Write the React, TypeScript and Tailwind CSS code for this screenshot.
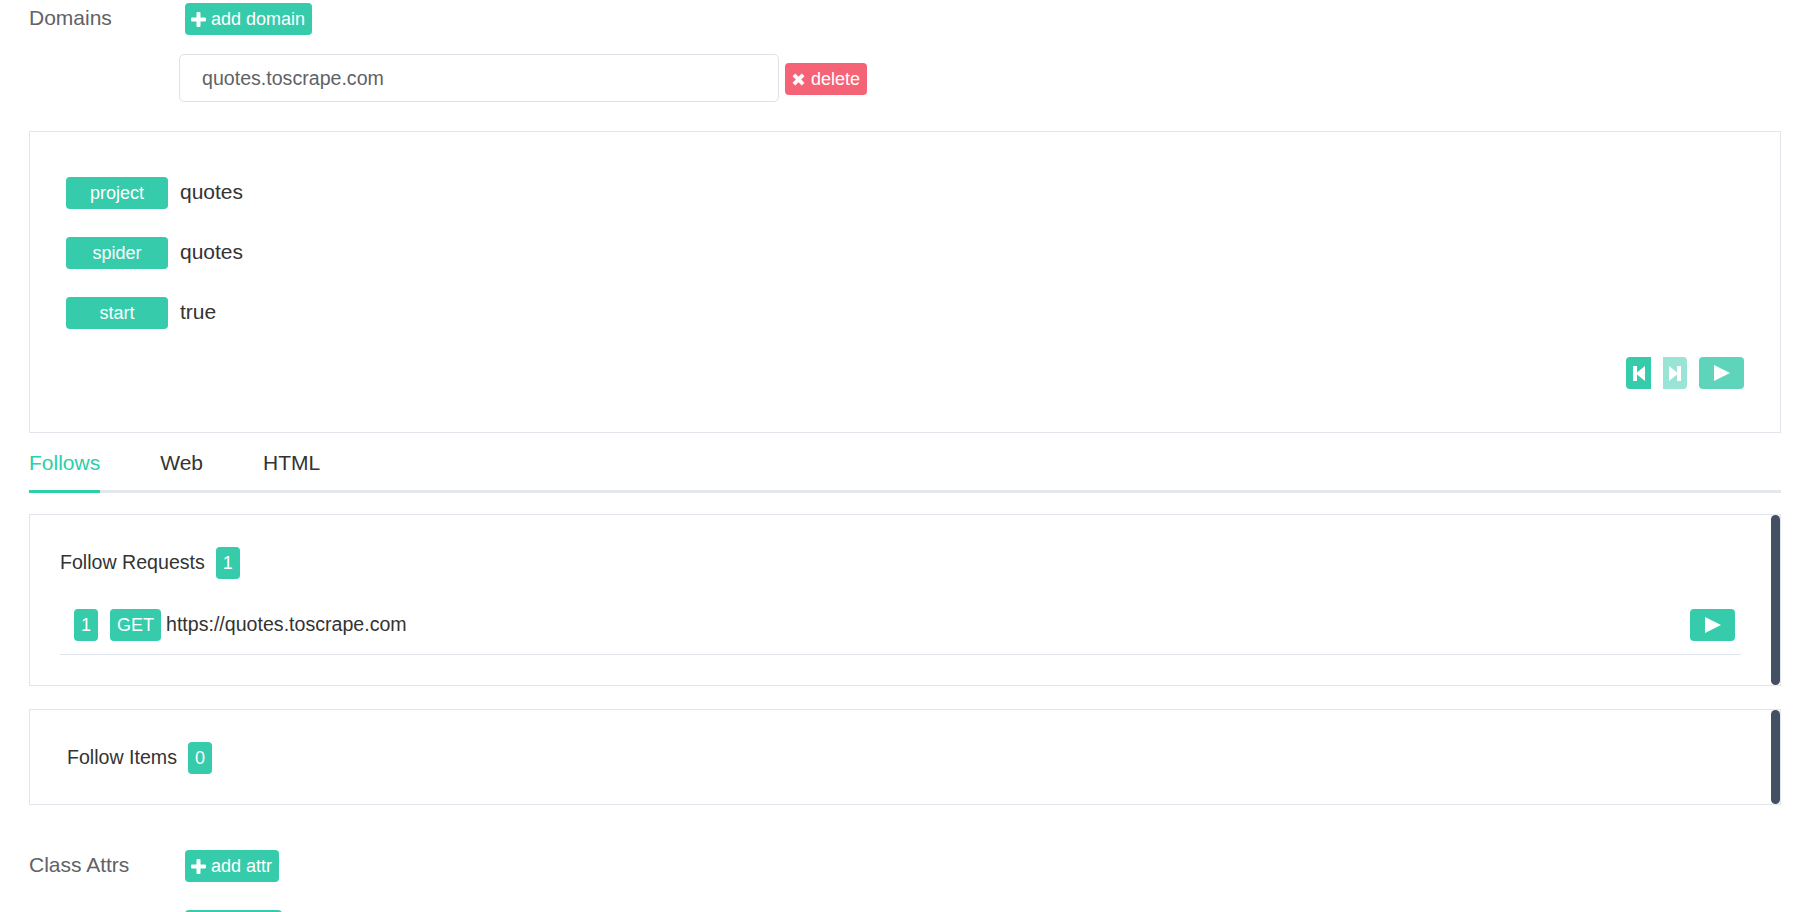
const tagClass =
  "inline-flex h-8 items-center justify-center rounded-[4px] bg-[#36cbaa] text-[18px] text-white";

function PlusIcon() {
  return (
    <svg width="15" height="15" viewBox="0 0 15 15" fill="currentColor" className="shrink-0">
      <path d="M5.5 1a1 1 0 0 1 1-1h2a1 1 0 0 1 1 1v4.5H14a1 1 0 0 1 1 1v2a1 1 0 0 1-1 1H9.500V14a1 1 0 0 1-1 1h-2a1 1 0 0 1-1-1V9.500H1a1 1 0 0 1-1-1v-2a1 1 0 0 1 1-1h4.500z" />
    </svg>
  );
}

function TimesIcon() {
  return (
    <svg width="13" height="13" viewBox="0 0 13 13" fill="none" stroke="currentColor" strokeWidth="3.8" className="shrink-0">
      <path d="M1.900 1.900L11.100 11.100M11.100 1.900L1.900 11.100" />
    </svg>
  );
}

function StepIcon({ flip }: { flip?: boolean }) {
  return (
    <svg width="12" height="15" viewBox="0 0 12 15" fill="currentColor" className={flip ? "-scale-x-100" : ""}>
      <path d="M0 0h4v6.500L12 0v15L4 8.500V15H0z" />
    </svg>
  );
}

function PlayIcon() {
  return (
    <svg width="16" height="16" viewBox="0 0 16 16" fill="currentColor">
      <path d="M0 0l16 8-16 8z" />
    </svg>
  );
}

function ScrollPanel({ className, children }: { className: string; children: React.ReactNode }) {
  return (
    <div className={`relative border border-[#e2e6ec] ${className}`}>
      {children}
      <div className="absolute top-0 right-0 bottom-0 w-[9px] rounded-[5px] bg-[#434f63]" />
    </div>
  );
}

function PlayButton({ faded }: { faded?: boolean }) {
  return (
    <button className={`${tagClass} w-[45px] ${faded ? "opacity-80" : ""}`}>
      <PlayIcon />
    </button>
  );
}

export default function App() {
  const rows = [
    ["project", "quotes"],
    ["spider", "quotes"],
    ["start", "true"],
  ];

  return (
    <div className="h-[912px] overflow-hidden bg-white px-[29px] pt-[3px] pr-[36px] font-['Liberation_Sans',Arial,sans-serif] text-[19.6px] text-[#333]">
      {/* Domains */}
      <div className="flex">
        <div className="-mt-[1px] w-[156px] text-[21px] text-[#606266]">Domains</div>
        <button className={`${tagClass} gap-[5px] pr-[7px] pl-[6px]`}>
          <PlusIcon />
          add domain
        </button>
      </div>
      <div className="mt-[19px] ml-[150px] flex items-center gap-[6px]">
        <div className="flex h-[48px] w-[600px] items-center rounded-[5px] border border-[#dfe2e8] px-[22px] pt-[2px] text-[#606266]">
          quotes.toscrape.com
        </div>
        <button className={`${tagClass} mt-[2px] gap-[6px] bg-[#f56476] pr-[7px] pl-[7px]`}>
          <TimesIcon />
          delete
        </button>
      </div>

      {/* Spider info */}
      <div className="mt-[29px] h-[302px] border border-[#e2e6ec] pt-[45px] pr-[36px] pl-[36px]">
        <div className="flex flex-col gap-[28px]">
          {rows.map(([label, value]) => (
            <div key={label} className="flex items-center gap-[12px]">
              <span className={`${tagClass} w-[102px]`}>{label}</span>
              <span className="-mt-[2px] text-[21px]">{value}</span>
            </div>
          ))}
        </div>
        <div className="mt-[28px] flex justify-end gap-[12px]">
          <button className={`${tagClass} w-[25px] rounded-r-none`}>
            <StepIcon />
          </button>
          <button className={`${tagClass} w-[24px] rounded-l-none opacity-50`}>
            <StepIcon flip />
          </button>
          <PlayButton faded />
        </div>
      </div>

      {/* Tabs */}
      <div className="flex h-[60px] gap-[60px] border-b-[3px] border-[#e4e7ec] text-[21px]">
        <div className="-mb-[3px] flex h-[60px] items-center border-b-[3px] border-[#2bcfa8] pt-[3px] text-[#2bcfa8]">Follows</div>
        <div className="flex h-[57px] items-center pt-[3px]">Web</div>
        <div className="flex h-[57px] items-center pt-[3px]">HTML</div>
      </div>

      <ScrollPanel className="mt-[21px] h-[172px] pt-[32px] pr-[39px] pl-[30px]">
        <div className="flex items-center gap-[11px]">
          <span>Follow Requests</span>
          <span className={`${tagClass} w-[24px]`}>1</span>
        </div>
        <div className="mt-[30px] flex h-[46px] items-start border-b border-[#e2e6ec] pr-[6px] pl-[14px]">
          <span className={`${tagClass} w-[24px]`}>1</span>
          <span className={`${tagClass} ml-[12px] w-[51px]`}>GET</span>
          <span className="ml-[5px] flex h-8 items-center">https://quotes.toscrape.com</span>
          <div className="ml-auto">
            <PlayButton />
          </div>
        </div>
      </ScrollPanel>

      <ScrollPanel className="mt-[23px] h-[96px] pt-[32px] pl-[37px]">
        <div className="flex items-center gap-[11px]">
          <span>Follow Items</span>
          <span className={`${tagClass} w-[24px]`}>0</span>
        </div>
      </ScrollPanel>

      {/* Class attrs */}
      <div className="mt-[45px] flex">
        <div className="-mt-[1px] w-[156px] text-[21px] text-[#606266]">Class Attrs</div>
        <button className={`${tagClass} gap-[5px] pr-[7px] pl-[6px]`}>
          <PlusIcon />
          add attr
        </button>
      </div>
      {/* next button, only its top edge is in view */}
      <div className="mt-[28px] ml-[156px]">
        <div className={`${tagClass} w-[97px]`} />
      </div>
    </div>
  );
}
